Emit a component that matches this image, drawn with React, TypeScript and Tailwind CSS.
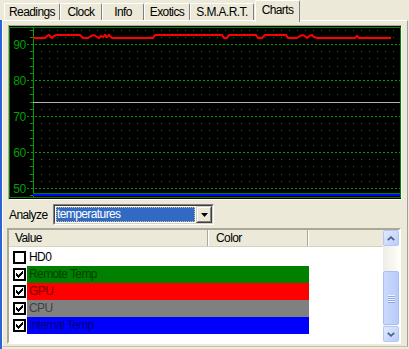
import React from 'react';

const GREEN = '#00a000';

const tabs = [
  { label: 'Readings', cls: 'w-[56px]' },
  { label: 'Clock', cls: 'w-[42px]' },
  { label: 'Info', cls: 'w-[42px]' },
  { label: 'Exotics', cls: 'w-[46px]' },
  { label: 'S.M.A.R.T.', cls: 'w-[64px]' },
  { label: 'Charts', cls: 'w-[45px]', active: true },
];

const rows = [
  { label: 'HD0', checked: false, cell: '', text: 'text-black' },
  { label: 'Remote Temp', checked: true, cell: 'bg-[#008000]', text: 'text-[#004000]' },
  { label: 'GPU', checked: true, cell: 'bg-[#ff0000]', text: 'text-[#800000]' },
  { label: 'CPU', checked: true, cell: 'bg-[#808080]', text: 'text-[#404040]' },
  { label: 'Internal Temp', checked: true, cell: 'bg-[#0000ff]', text: 'text-[#000080]' },
];

// red trace, page coords
const redAbs: [number, number][] = [
  [33, 38], [45, 38], [47, 36], [49, 35], [51, 37], [52, 38], [54, 36], [56, 35], [80, 35], [83, 38],
  [88, 38], [91, 36], [94, 35], [97, 37], [99, 38], [101, 36], [103, 37], [105, 35], [107, 37], [109, 35],
  [112, 38], [153, 38], [155, 35], [222, 35], [224, 38], [227, 38], [229, 35], [256, 35], [258, 38],
  [262, 38], [265, 35], [286, 35], [288, 38], [297, 38], [300, 36], [303, 35], [306, 37], [307, 38],
  [309, 36], [312, 35], [314, 37], [317, 38], [355, 38], [357, 36], [359, 38], [391, 38],
];

const majors = [
  { v: 90, y: 18 },
  { v: 80, y: 54 },
  { v: 70, y: 90 },
  { v: 60, y: 126 },
  { v: 50, y: 162 },
];

const minors: number[] = [];
for (let k = -2; k <= 21; k++) {
  const y = 18 + 7.2 * k;
  if (k % 5 !== 0 && y > 2 && y < 170) minors.push(Math.round(y));
}
const dotXs: number[] = [];
for (let x = 32; x < 391; x += 8) dotXs.push(x);

function Chart() {
  const pts = redAbs.map(([x, y]) => `${x - 9},${y - 26}`).join(' ');
  return (
    <svg width="392" height="173" viewBox="0 0 392 173" className="block">
      <rect x="0" y="0" width="392" height="173" fill="#000" />
      {minors.map((y) =>
        dotXs.map((x) => <rect key={`${x}-${y}`} x={x} y={y} width="1" height="1" fill="#008000" />)
      )}
      {majors.map((m) => (
        <g key={m.v}>
          <line x1="18" x2="391" y1={m.y + 0.5} y2={m.y + 0.5} stroke={GREEN} strokeDasharray="2 2" />
          <text
            x="16.5"
            y={m.y + 5}
            textAnchor="end"
            fontSize="12"
            fill={GREEN}
            fontFamily='"Liberation Sans", Arial, sans-serif'
          >
            {m.v}
          </text>
        </g>
      ))}
      {minors.map((y) => (
        <line key={y} x1="21" x2="24" y1={y + 0.5} y2={y + 0.5} stroke={GREEN} />
      ))}
      <line x1="24.5" x2="24.5" y1="1" y2="171" stroke={GREEN} />
      <line x1="24" x2="391" y1="76.5" y2="76.5" stroke="#b4b4b4" />
      <line x1="24" x2="391" y1="167.5" y2="167.5" stroke="#008000" />
      <line x1="24" x2="391" y1="169" y2="169" stroke="#0000ff" strokeWidth="2" />
      <polyline points={pts} fill="none" stroke="#ff0000" strokeWidth="2" />
      <rect x="0.5" y="1.5" width="391" height="170" fill="none" stroke="#008000" />
    </svg>
  );
}

function CheckMark() {
  return (
    <svg width="7" height="7" viewBox="0 0 7 7" shapeRendering="crispEdges">
      {[2, 3, 4, 3, 2, 1, 0].map((y, x) => (
        <rect key={x} x={x} y={y} width="1" height="3" fill="#000" />
      ))}
    </svg>
  );
}

function Chevron({ down }: { down?: boolean }) {
  return (
    <svg width="8" height="5" viewBox="0 0 8 5" className={down ? 'rotate-180' : ''}>
      <path d="M0.8 4.2 L4 1.2 L7.2 4.2" fill="none" stroke="#4d6185" strokeWidth="1.8" />
    </svg>
  );
}

function ScrollButton({ down }: { down?: boolean }) {
  return (
    <div className="h-[16px] w-[16px] rounded-[2px] border border-[#b4c8f6] bg-gradient-to-br from-[#e1eafe] to-[#b9cdfa] flex items-center justify-center">
      <Chevron down={down} />
    </div>
  );
}

export default function App() {
  return (
    <div
      className="w-[409px] h-[349px] bg-[#ece9d8] overflow-hidden flex flex-col text-[12px] tracking-[-0.6px] text-black"
      style={{ fontFamily: '"Liberation Sans", Arial, sans-serif' }}
    >
      {/* tab strip */}
      <div className="h-[20px] flex items-end pl-[4px] relative z-10">
        {tabs.map((t) =>
          t.active ? (
            <div
              key={t.label}
              className={`${t.cls} ml-[1px] h-[22px] -mb-[2px] bg-[#ece9d8] border-t border-l border-r border-t-white border-l-white border-r-[#808080] rounded-t-[2px] flex justify-center pt-[2px] leading-[14px]`}
            >
              {t.label}
            </div>
          ) : (
            <div
              key={t.label}
              className={`${t.cls} h-[17px] bg-[#ece9d8] border-t border-l border-r border-t-white border-l-white border-r-[#808080] rounded-t-[2px] flex justify-center pt-[1px] leading-[14px]`}
            >
              {t.label}
            </div>
          )
        )}
      </div>

      <div className="flex">
        <div className="w-[2px] h-[329px] bg-[#2a62d8]" />
        <div className="w-[406px] h-[327px] border-t border-l border-r border-b border-t-white border-l-white border-r-[#a0a0a0] border-b-[#c4c1b4] flex flex-col">
          {/* chart */}
          <div className="ml-[5px] mt-[4px] w-[394px] h-[175px] border border-t-[#aca899] border-l-[#aca899] border-b-white border-r-white">
            <Chart />
          </div>

          {/* analyze */}
          <div className="mt-[4px] h-[21px] flex items-center">
            <span className="ml-[6px] w-[44px] leading-[14px]">Analyze</span>
            <div className="w-[161px] h-[21px] border border-t-[#808080] border-l-[#808080] border-b-white border-r-white">
              <div className="h-full border border-t-[#404040] border-l-[#404040] border-b-[#d4d0c8] border-r-[#d4d0c8] bg-white flex">
                <div className="ml-[1px] my-[1px] w-[139px] bg-[#316ac5] border border-dotted border-[#d8c27a] text-white leading-[13px]">
                  temperatures
                </div>
                <div className="ml-auto w-[16px] h-full border border-t-[#d4d0c8] border-l-[#d4d0c8] border-b-[#404040] border-r-[#404040]">
                  <div className="h-full border border-t-white border-l-white border-b-[#808080] border-r-[#808080] bg-[#ece9d8] flex items-center justify-center">
                    <svg width="7" height="4" viewBox="0 0 7 4">
                      <path d="M0 0 H7 L3.5 4 Z" fill="#000" />
                    </svg>
                  </div>
                </div>
              </div>
            </div>
          </div>

          {/* list view */}
          <div className="ml-[4px] mt-[3px] w-[394px] h-[116px] border-2 border-t-[#aca899] border-l-[#aca899] border-b-white border-r-white flex">
            <div className="flex-1 flex flex-col bg-white">
              <div className="h-[17px] flex bg-[#ece9d8] border-b border-b-[#d6d2c2] leading-[16px]">
                <div className="w-[198px] pl-[6px]">Value</div>
                <div className="w-px bg-[#aca899]" />
                <div className="w-px bg-white" />
                <div className="w-[98px] pl-[7px]">Color</div>
                <div className="w-px bg-[#aca899]" />
                <div className="w-px bg-white" />
                <div className="flex-1" />
              </div>
              <div className="pt-[2px] flex flex-col">
                {rows.map((r) => (
                  <div key={r.label} className="h-[17px] flex items-center pl-[4px]">
                    <div className="w-[13px] h-[13px] border-2 border-black bg-white flex items-center justify-center">
                      {r.checked && <CheckMark />}
                    </div>
                    <div className={`ml-[1px] w-[282px] h-[17px] pl-[2px] leading-[17px] ${r.cell} ${r.text}`}>
                      {r.label}
                    </div>
                  </div>
                ))}
              </div>
            </div>
            {/* scrollbar */}
            <div className="w-[16px] flex flex-col bg-gradient-to-r from-[#eeede5] to-[#fdfdfa]">
              <ScrollButton />
              <div className="h-[25px]" />
              <div className="h-[54px] rounded-[2px] border border-[#a9bff4] bg-gradient-to-r from-[#cbdafe] to-[#b8cbf9] flex flex-col items-center justify-center gap-[1px]">
                {[0, 1, 2, 3].map((i) => (
                  <div key={i} className="w-[7px] h-[1px] bg-[#eef3ff] shadow-[0_1px_0_#8ea7e6]" />
                ))}
              </div>
              <div className="h-[1px]" />
              <ScrollButton down />
            </div>
          </div>
        </div>
      </div>
    </div>
  );
}
